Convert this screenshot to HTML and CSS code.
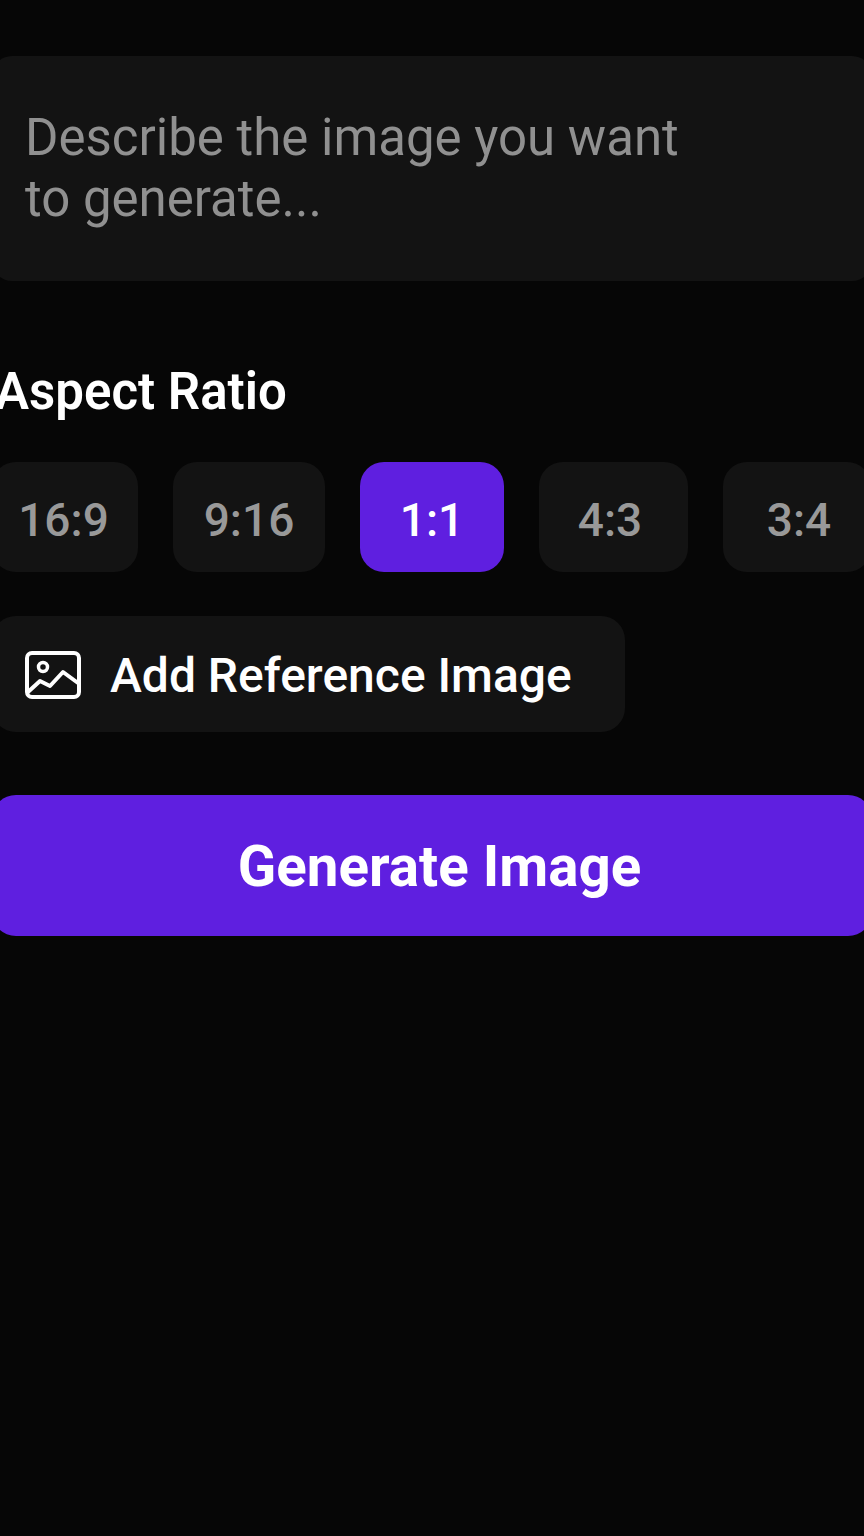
FILE: index.html
```html
<!DOCTYPE html>
<html lang="en">
<head>
<meta charset="UTF-8">
<meta name="viewport" content="width=device-width, initial-scale=1.0">
<title>Generate Image</title>
<link rel="stylesheet" href="styles.css">
</head>
<body>
<div class="container">
  <div class="prompt">Describe the image you want<br>to generate...</div>

  <h2 class="section-title">Aspect Ratio</h2>
  <div class="ratios">
    <button class="ratio">16:9</button>
    <button class="ratio">9:16</button>
    <button class="ratio active">1:1</button>
    <button class="ratio">4:3</button>
    <button class="ratio">3:4</button>
  </div>

  <button class="reference-button">
    <svg class="reference-icon" viewBox="0 0 56 48" fill="none" stroke="#fff" stroke-width="4" stroke-linejoin="round" stroke-linecap="round">
      <rect x="2" y="2" width="52" height="44" rx="5"/>
      <circle cx="18" cy="16" r="4.5" stroke-width="3.5"/>
      <polyline points="3,41 15,30 25,35 38,21 53,32"/>
    </svg>
    Add Reference Image
  </button>

  <button class="generate-button">Generate Image</button>
</div>
</body>
</html>
```

FILE: styles.css
```css
html, body {
  margin: 0;
  height: 100%;
  overflow: hidden;
  background-color: #060606;
}

body {
  font-family: Roboto, "Liberation Sans", sans-serif;
  color: #fff;
}

.container {
  width: 880px;
  margin-left: -8px;
  padding-top: 56px;
  display: flex;
  flex-direction: column;
}

button {
  font-family: inherit;
  border: none;
}

.prompt {
  height: 225px;
  box-sizing: border-box;
  padding: 51px 0 0 33px;
  background-color: #131313;
  border-radius: 20px;
  font-size: 51px;
  line-height: 61px;
  color: #909090;
}

.section-title {
  margin: 80px 0 0 3px;
  font-size: 51px;
  line-height: 62px;
  font-weight: 600;
}

.ratios {
  display: grid;
  grid-template-columns: 146px 152px 144px 149px 148px;
  column-gap: 35px;
  margin-top: 39px;
}

.ratio {
  height: 110px;
  padding: 5px 0 0;
  background-color: #131313;
  border-radius: 24px;
  font-size: 46px;
  font-weight: 500;
  color: #999;
}

.ratio:nth-child(1) {
  padding-right: 3px;
}

.ratio:nth-child(4) {
  padding-right: 7px;
}

.ratio:nth-child(5) {
  padding-left: 4px;
}

.ratio.active {
  background-color: #5f1fe0;
  color: #fff;
}

.reference-button {
  display: flex;
  align-items: center;
  gap: 29px;
  width: 633px;
  height: 116px;
  margin-top: 44px;
  padding: 2px 0 0 33px;
  background-color: #131313;
  border-radius: 24px;
  font-size: 48px;
  font-weight: 500;
  color: #fff;
}

.reference-icon {
  width: 56px;
  height: 48px;
  flex-shrink: 0;
}

.generate-button {
  height: 141px;
  margin-top: 63px;
  padding: 2px 0 0 15px;
  background-color: #5f1fe0;
  border-radius: 24px;
  font-size: 56.5px;
  font-weight: 700;
  color: #fff;
}
```
